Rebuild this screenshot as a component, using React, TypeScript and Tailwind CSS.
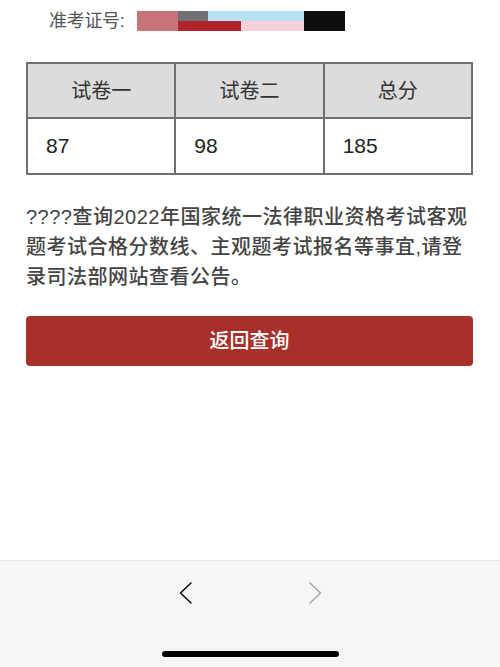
import React from "react";

const font = {
  fontFamily: '"Liberation Sans", "Noto Sans CJK SC", sans-serif',
};

function RedactedId() {
  return (
    <div className="flex h-[20px] ml-[12px]">
      <div className="w-[41px] h-full bg-[#c8727a]" />
      <div className="flex flex-col w-[126px] h-full">
        <div className="flex h-[10px]">
          <div className="w-[30px] bg-[#707074]" />
          <div className="flex-1 bg-[#b8e0f0]" />
        </div>
        <div className="flex h-[10px]">
          <div className="w-[63px] bg-[#b0252a]" />
          <div className="flex-1 bg-[#f5d3d8]" />
        </div>
      </div>
      <div className="w-[41px] h-full bg-[#0e0e0e]" />
    </div>
  );
}

function App() {
  const headers = ["试卷一", "试卷二", "总分"];
  const scores = ["87", "98", "185"];

  return (
    <div className="w-full h-[667px] flex flex-col bg-white" style={font}>
      <div className="px-[26px]">
        <div className="mt-[11px] h-[20px] flex items-center pl-[23px]">
          <span className="text-[18px] leading-[20px] text-[#555] tracking-[-0.3px]">准考证号:</span>
          <RedactedId />
        </div>

        <table className="mt-[31px] w-[447px] table-fixed border-collapse">
          <thead>
            <tr>
              {headers.map((h) => (
                <th
                  key={h}
                  className="h-[55px] border-2 border-[#707070] bg-[#dcdcdc] text-[20px] font-normal text-[#333]"
                >
                  {h}
                </th>
              ))}
            </tr>
          </thead>
          <tbody>
            <tr>
              {scores.map((s) => (
                <td
                  key={s}
                  className="h-[56px] border-2 border-[#707070] pl-[18px] text-[21px] text-[#222]"
                >
                  {s}
                </td>
              ))}
            </tr>
          </tbody>
        </table>

        <p className="mt-[27px] text-[20px] leading-[30px] font-medium text-[#444] whitespace-nowrap tracking-[0.5px]">
          ????查询2022年国家统一法律职业资格考试客观
          <br />
          题考试合格分数线、主观题考试报名等事宜,请登
          <br />
          录司法部网站查看公告。
        </p>

        <button className="mt-[24px] w-[447px] h-[50px] rounded-[4px] bg-[#a8302a] text-white text-[20px] font-medium">
          返回查询
        </button>
      </div>

      <div className="flex-1" />

      <div className="h-[107px] bg-[#f6f6f6] border-t border-[#e6e6e6] flex flex-col">
        <div className="pt-[21px] flex justify-center gap-[113px]">
          <svg width="16" height="22" viewBox="0 0 16 22" fill="none">
            <path d="M13 1 L2.5 11 L13 21" stroke="#111" strokeWidth="1.6" strokeLinecap="round" strokeLinejoin="round" />
          </svg>
          <svg width="16" height="22" viewBox="0 0 16 22" fill="none">
            <path d="M3 1 L13.5 11 L3 21" stroke="#a8a8a8" strokeWidth="1.6" strokeLinecap="round" strokeLinejoin="round" />
          </svg>
        </div>
        <div className="mt-auto mb-[10px] mx-auto w-[177px] h-[6px] rounded-full bg-black" />
      </div>
    </div>
  );
}

export default App;
